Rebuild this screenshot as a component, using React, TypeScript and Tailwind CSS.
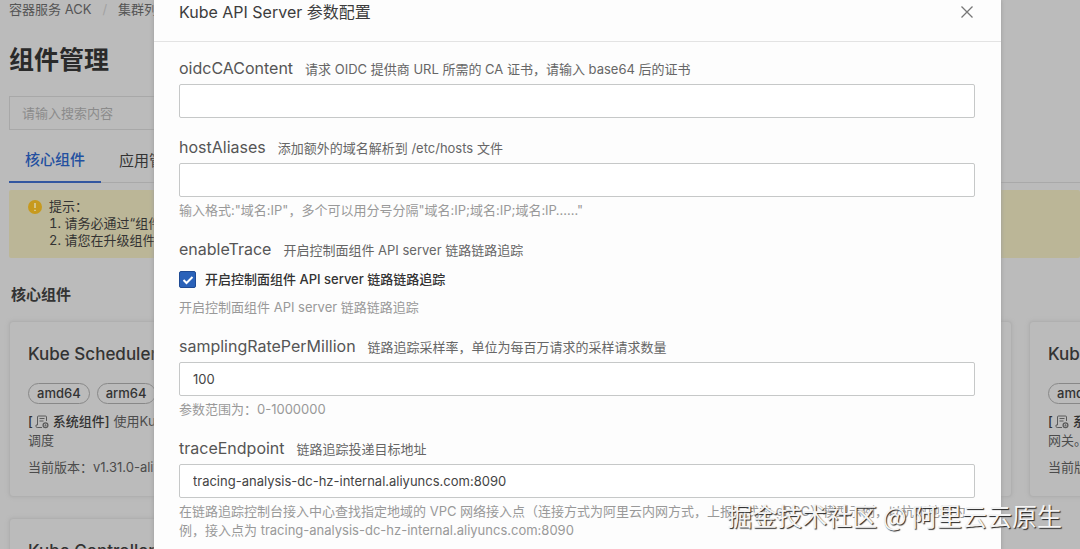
import type { ReactNode } from "react";

function SystemIcon() {
  return (
    <svg viewBox="0 0 14 14" className="mr-1 ml-0.5 h-3.5 w-3.5 shrink-0" fill="none" stroke="#5a5a5a" strokeWidth="1">
      <path d="M2.500 10V2a1 1 0 0 1 1-1h7a1 1 0 0 1 1 1v4M2.500 10H1v1.300a1.200 1.200 0 0 0 1.200 1.200H7M4.500 3.500h5M4.500 6h4" />
      <circle cx="10.500" cy="10.300" r="2.400" strokeWidth="1.300" />
      <circle cx="10.500" cy="10.300" r="0.600" />
    </svg>
  );
}

function ComponentCard({ name, lines, version }: { name: string; lines: [string, string]; version: string }) {
  return (
    <article className="h-44 overflow-hidden rounded border border-[#b0b0b0] bg-[#bbbbbb] px-[18px] pt-5 text-[13px] text-[#4c4c4c] shadow-[0_0_4px_#adadad]">
      <h3 className="text-[17px] leading-6 font-medium text-[#333333]">{name}</h3>
      <div className="mt-[17px] flex gap-[7px]">
        {["amd64", "arm64"].map((arch) => (
          <span key={arch} className="h-[21px] rounded-full border border-[#888888] px-2 leading-[19px] font-medium text-[#333333]">
            {arch}
          </span>
        ))}
      </div>
      <div className="mt-2 leading-[19px]">
        <p className="flex items-center whitespace-nowrap">
          <b className="flex items-center font-medium text-[#333333]">
            [<SystemIcon />系统组件]
          </b>
          <span className="ml-1">{lines[0]}</span>
        </p>
        <p>{lines[1]}</p>
      </div>
      <p className="mt-2 leading-[19px]">当前版本：{version}</p>
    </article>
  );
}

const cards: { name: string; lines: [string, string]; version: string }[] = [
  { name: "Kube Scheduler", lines: ["使用Kube Scheduler进行", "调度"], version: "v1.31.0-aliyun" },
  { name: "Kube API Server", lines: ["集群的统一", "入口。"], version: "v1.31.0-aliyun" },
  { name: "Kube API Gateway", lines: ["集群", "网关。"], version: "v1.31.0-aliyun" },
  { name: "Kube Controller Manager", lines: ["集群资源", "管理"], version: "v1.31.0-aliyun" },
];

function ManagementPage() {
  return (
    <main className="h-full overflow-hidden pl-[9px]">
      <nav className="flex h-5 items-center text-[13px] text-[#555555]" aria-label="面包屑">
        <a href="#ack">容器服务 ACK</a>
        <span className="mx-[11px] text-[#a2a2a2]">/</span>
        <a href="#clusters">集群列表</a>
      </nav>
      <h1 className="mt-5 text-[25px] leading-10 font-bold text-[#2a2a2a]">组件管理</h1>
      <input
        type="search"
        aria-label="搜索"
        placeholder="请输入搜索内容"
        className="mt-4 block h-[34px] w-80 border border-[#a8a8a8] px-3 text-[13px] placeholder:text-[#8b8b8b]"
      />
      <div className="mt-2 flex h-[45px] border-b border-[#a9a9a9] text-[15px] text-[#333333]">
        <button className="-mb-px border-b-2 border-[#3256a0] px-4 pt-0.5 font-medium text-[#2350a0]">核心组件</button>
        <button className="ml-0.5 px-4 pt-0.5">应用管理</button>
      </div>
      <section className="mt-[7px] flex h-[68px] rounded-xs bg-[#bbb697] px-[19px] pt-2 text-[13px] leading-[17px] text-[#333333]">
        <svg viewBox="0 0 14 14" className="mt-0.5 h-3.5 w-3.5">
          <circle cx="7" cy="7" r="7" fill="#c79a1e" />
          <path d="M7 3v5M7 9.700v1.400" stroke="#dcd6b4" strokeWidth="1.4" />
        </svg>
        <div className="ml-[7px]">
          <p>提示：</p>
          <ol className="list-inside list-decimal">
            <li>请务必通过“组件管理”升级组件</li>
            <li>请您在升级组件前查看说明</li>
          </ol>
        </div>
      </section>
      <h2 className="mt-[26px] ml-0.5 text-[15px] leading-[22px] font-bold text-[#333333]">核心组件</h2>
      <div className="mt-[15px] grid grid-cols-[repeat(3,493px)] gap-x-[17px] gap-y-[21px]">
        {cards.map((card) => (
          <ComponentCard key={card.name} {...card} />
        ))}
      </div>
    </main>
  );
}

function Field({ id, label, description, hint, children }: { id: string; label: string; description: string; hint?: string; children: ReactNode }) {
  return (
    <div>
      <label htmlFor={id} className="flex h-6 items-baseline text-[#555555]">
        <span className="text-base leading-6">{label}</span>
        <span className="ml-3 text-[13px] leading-5 text-[#666666]">{description}</span>
      </label>
      {children}
      {hint && <p className="mt-1 text-[13px] leading-[19px] text-[#999999]">{hint}</p>}
    </div>
  );
}

function TextInput({ id, value }: { id: string; value?: string }) {
  return (
    <input
      id={id}
      type="text"
      defaultValue={value}
      className="mt-1 block h-[34px] w-full rounded-xs border border-[#c6c8c8] bg-white px-[13px] text-[13px] text-[#444444]"
    />
  );
}

function ConfigDialog() {
  return (
    <section role="dialog" aria-labelledby="dialog-title" className="w-full bg-[#fdfdfd] shadow-[0_0_4px_#999999]">
      <header className="flex h-[42px] items-start justify-between border-b border-[#e3e3e3] pr-[26px] pl-[25px]">
        <h2 id="dialog-title" className="text-base leading-6 text-[#3c3c3c]">Kube API Server 参数配置</h2>
        <button aria-label="关闭" className="flex h-6 items-center">
          <svg viewBox="0 0 16 16" className="h-4 w-4" stroke="#777777" strokeWidth="1.3">
            <path d="M2.500 2.500l11 11M13.500 2.500l-11 11" />
          </svg>
        </button>
      </header>
      <form className="flex flex-col gap-[17px] pt-3.5 pr-[26px] pb-6 pl-[25px]">
        <Field id="oidcCAContent" label="oidcCAContent" description="请求 OIDC 提供商 URL 所需的 CA 证书，请输入 base64 后的证书">
          <TextInput id="oidcCAContent" />
        </Field>
        <Field
          id="hostAliases"
          label="hostAliases"
          description="添加额外的域名解析到 /etc/hosts 文件"
          hint={'输入格式:"域名:IP"，多个可以用分号分隔"域名:IP;域名:IP;域名:IP……"'}
        >
          <TextInput id="hostAliases" />
        </Field>
        <Field
          id="enableTrace"
          label="enableTrace"
          description="开启控制面组件 API server 链路链路追踪"
          hint="开启控制面组件 API server 链路链路追踪"
        >
          <div className="mt-1 flex h-[29px] items-center">
            <span className="grid h-[17px] w-[17px] place-items-center">
              <input
                id="enableTrace"
                type="checkbox"
                defaultChecked
                className="peer col-start-1 row-start-1 h-[17px] w-[17px] appearance-none rounded-xs border border-[#1f4b94] checked:bg-[#2a62b9]"
              />
              <svg viewBox="0 0 12 12" className="pointer-events-none col-start-1 row-start-1 hidden h-3 w-3 peer-checked:block" fill="none" stroke="#ffffff" strokeWidth="2">
                <path d="M1.500 6l3 3 6-6" />
              </svg>
            </span>
            <label htmlFor="enableTrace" className="ml-[9px] text-[13px] font-medium text-[#333333]">
              开启控制面组件 API server 链路链路追踪
            </label>
          </div>
        </Field>
        <Field
          id="samplingRatePerMillion"
          label="samplingRatePerMillion"
          description="链路追踪采样率，单位为每百万请求的采样请求数量"
          hint="参数范围为：0-1000000"
        >
          <TextInput id="samplingRatePerMillion" value="100" />
        </Field>
        <Field
          id="traceEndpoint"
          label="traceEndpoint"
          description="链路追踪投递目标地址"
          hint="在链路追踪控制台接入中心查找指定地域的 VPC 网络接入点（连接方式为阿里云内网方式，上报方式为 gRPC）模型示例，以杭州地域为例，接入点为 tracing-analysis-dc-hz-internal.aliyuncs.com:8090"
        >
          <TextInput id="traceEndpoint" value="tracing-analysis-dc-hz-internal.aliyuncs.com:8090" />
        </Field>
      </form>
    </section>
  );
}

export default function App() {
  return (
    <div className="relative h-screen overflow-hidden bg-[#bbbbbb] font-['Inter','Noto_Sans_CJK_SC',sans-serif]">
      <ManagementPage />
      <div className="absolute inset-0 flex items-start overflow-hidden pr-[79px] pl-[154px]">
        <ConfigDialog />
      </div>
      <p className="pointer-events-none absolute right-[18px] bottom-4 font-['Noto_Sans_CJK_SC',sans-serif] text-[25px] leading-9 whitespace-nowrap text-[#f4f4f4] [text-shadow:1px_1px_1px_#222222]">
        掘金技术社区 @ 阿里云云原生
      </p>
    </div>
  );
}
